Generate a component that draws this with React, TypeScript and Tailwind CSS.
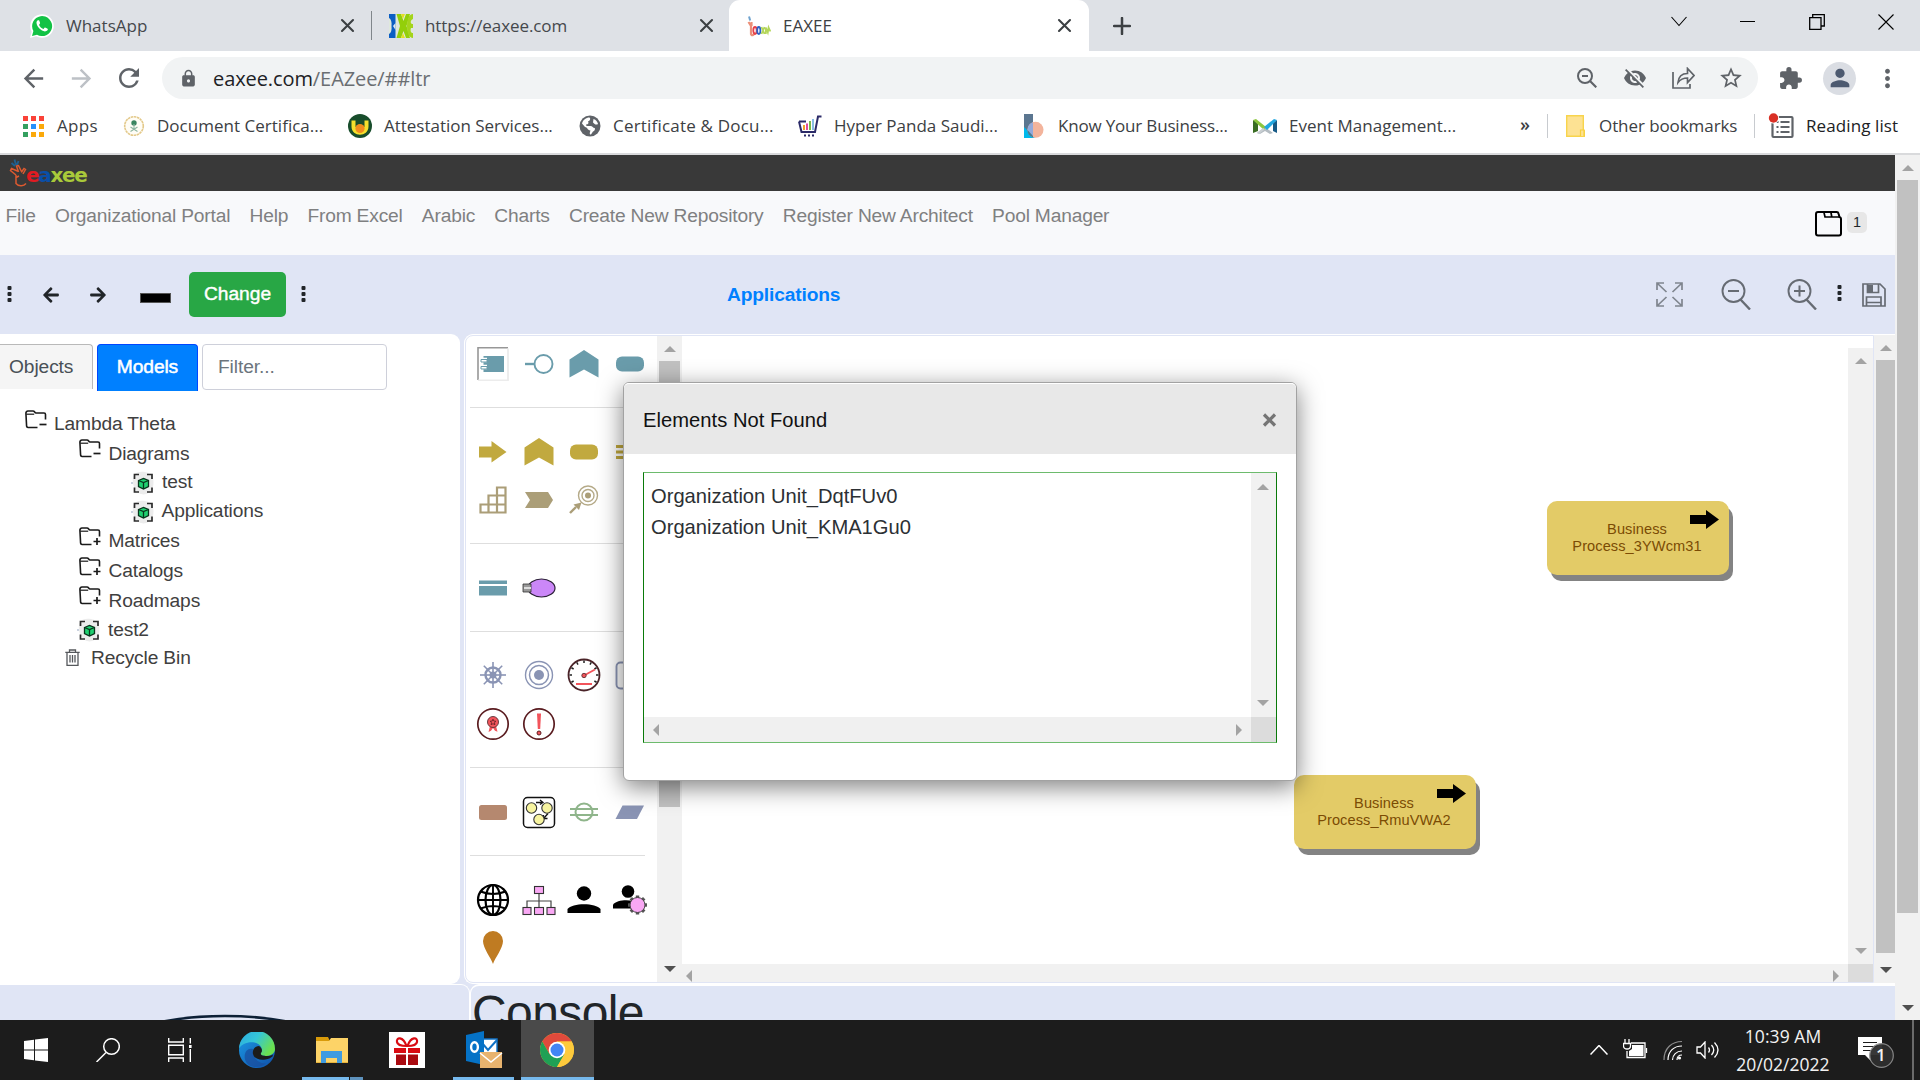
import React from "react";
import {
  MdArrowBack,
  MdArrowForward,
  MdRefresh,
  MdLock,
  MdStarBorder,
  MdVisibilityOff,
  MdExtension,
  MdPerson,
  MdMoreVert,
} from "react-icons/md";
import { FaArrowLeft, FaArrowRight } from "react-icons/fa";

const ui = "font-['Open_Sans','Noto_Sans',sans-serif]";

/* ---------- shared pieces ---------- */

function Arrow({ dir, dark }: { dir: "up" | "down" | "left" | "right"; dark?: boolean }) {
  const d = {
    up: "M0 6 L6 0 L12 6Z",
    down: "M0 0 L12 0 L6 6Z",
    left: "M6 0 L6 12 L0 6Z",
    right: "M0 0 L6 6 L0 12Z",
  }[dir];
  const vertical = dir === "up" || dir === "down";
  return (
    <svg
      width={vertical ? 12 : 6}
      height={vertical ? 6 : 12}
      viewBox={vertical ? "0 0 12 6" : "0 0 6 12"}
      className="shrink-0"
    >
      <path d={d} fill={dark ? "#505050" : "#a3a3a3"} />
    </svg>
  );
}

function VDots({ className = "" }: { className?: string }) {
  return (
    <svg width="5" height="16" viewBox="0 0 5 16" className={"shrink-0 " + className}>
      <rect x="0.5" y="0" width="4" height="4" rx="1" fill="#212529" />
      <rect x="0.5" y="6" width="4" height="4" rx="1" fill="#212529" />
      <rect x="0.5" y="12" width="4" height="4" rx="1" fill="#212529" />
    </svg>
  );
}

/* ---------- browser chrome ---------- */

const WhatsAppIcon = () => (
  <svg width="24" height="24" viewBox="0 0 24 24">
    <path d="M0 24 L1.7 17.8 A11.8 11.8 0 1 1 6.2 22.3Z" fill="#fff" />
    <path d="M2 22 L3.4 17 A10 10 0 1 1 7 20.7Z" fill="#12c245" />
    <path
      d="M8 6.2 C7.2 6.4 6.3 7.6 6.5 9 C7 13 11 17 15 17.4 C16.6 17.4 17.8 16.4 17.9 15.1 C17.9 14.5 15.4 13.3 14.9 13.4 C14.3 13.7 13.9 15 13.3 14.9 C11.4 14.2 9.9 12.7 9.1 10.9 C9.1 10.3 10.2 9.6 10.1 9 L9.2 6.6 C9 6.2 8.6 6.1 8 6.2Z"
      fill="#fff"
    />
  </svg>
);

const EaxeeFavicon = () => (
  <svg width="24" height="24" viewBox="0 0 24 24">
    <path d="M0 0h24v24H0z" fill="#dfe8dc" />
    <path d="M0 0h6.500v24H0v-4c2-1 3-4 2.500-8C3 8 2 5 0 4z" fill="#0b5fc4" />
    <path d="M6.500 3v6l-2.500 3 2.500 4" fill="#dfe8f0" />
    <path d="M7.500 0h4.500l2.500 7L17 0h4l-3.500 12L21 24h-4l-2.500-7L12 24H7.500l3.500-12z" fill="#93cf0a" />
    <path d="M24 0v5c-2.500 1-3 4-1 5h1v4h-2c-1 3 0 5 2 5v5c-4 0-6-5-6-12S20 0 24 0z" fill="#a4d41c" />
    <path d="M12 0h4l-2 5zM12 24h4l-2-5z" fill="#e3e022" />
  </svg>
);

const HandFavicon = () => (
  <svg width="24" height="24" viewBox="0 0 24 24">
    <path d="M2 2.500l1.200 4" stroke="#6fa3cf" strokeWidth="2" />
    <path d="M1.500 8L4 12v8c1 2.500 3 1 3.500-2M4.500 12V8" stroke="#ec8f78" strokeWidth="2.200" fill="none" />
    <ellipse cx="8" cy="16.500" rx="1.700" ry="3.500" fill="none" stroke="#e8404a" strokeWidth="1.800" />
    <ellipse cx="11.800" cy="16.500" rx="1.600" ry="3.500" fill="none" stroke="#2d62c5" strokeWidth="1.800" />
    <path d="M14.500 13l3 7M17.500 13l-3 7M18.800 20v-6.500l2 5 .8-5 1.800 4" stroke="#b4d65a" strokeWidth="1.800" fill="none" />
  </svg>
);

function TabClose() {
  return (
    <svg width="19" height="19" viewBox="0 0 19 19">
      <path d="M4 4l11 11M15 4L4 15" stroke="#3c4043" strokeWidth="2.100" strokeLinecap="round" />
    </svg>
  );
}

function TabStrip() {
  return (
    <div className={"flex h-[51px] shrink-0 items-stretch bg-[#dee1e6] text-[17px] text-[#45484c] " + ui}>
      <div className="flex w-[371px] items-center pl-[30px]">
        <div className="w-[36px]"><WhatsAppIcon /></div>
        <div className="w-[272px]">WhatsApp</div>
        <TabClose />
      </div>
      <div className="my-auto h-[29px] w-px bg-[#80868b]" />
      <div className="flex w-[357px] items-center pl-[17px]">
        <div className="w-[36px]"><EaxeeFavicon /></div>
        <div className="w-[272px] tracking-[-0.08px]">https://eaxee.com</div>
        <TabClose />
      </div>
      <div className="flex w-[360px] items-center rounded-t-[11px] bg-white pl-[18px]">
        <div className="w-[36px]"><HandFavicon /></div>
        <div className="w-[272px] text-[#3c4043]">EAXEE</div>
        <TabClose />
      </div>
      <div className="flex flex-1 items-center pl-[24px]">
        <svg width="18" height="18" viewBox="0 0 18 18"><path d="M9 1v16M1 9h16" stroke="#3c4043" strokeWidth="2.500" strokeLinecap="round" /></svg>
      </div>
      <div className="flex h-[43px] items-center text-black">
        <div className="flex w-[69px] justify-center"><svg width="16" height="11" viewBox="0 0 16 11"><path d="M.5 1l7.500 8.500L15.500 1" fill="none" stroke="currentColor" strokeWidth="1.100" /></svg></div>
        <div className="flex w-[69px] justify-center"><div className="h-px w-[15px] bg-black" /></div>
        <div className="flex w-[69px] justify-center"><svg width="16" height="16" viewBox="0 0 16 16"><path d="M.7 3.700h11.300V15.300H.7zM3.700 3.700V.7H15.300V12H12" fill="none" stroke="currentColor" strokeWidth="1.300" /></svg></div>
        <div className="flex w-[69px] justify-center"><svg width="16" height="16" viewBox="0 0 16 16"><path d="M.5 .5l15 15M15.500 .5l-15 15" stroke="currentColor" strokeWidth="1.100" /></svg></div>
      </div>
    </div>
  );
}

function AddressBar() {
  const g = "text-[#5f6368]";
  return (
    <div className={"flex h-[54px] shrink-0 items-center bg-white pl-[9px] " + ui}>
      <div className="flex w-[48px] justify-center"><MdArrowBack size={29} className={g} /></div>
      <div className="flex w-[48px] justify-center"><MdArrowForward size={29} className="text-[#bdc1c6]" /></div>
      <div className="flex w-[57px] pl-[9px]"><MdRefresh size={30} className={g} /></div>
      <div className="flex h-[42px] w-[1596px] items-center rounded-full bg-[#f1f3f4] pl-[17px]">
        <MdLock size={19} className={"mr-[15px] " + g} />
        <div className="flex-1 pt-px text-[20px] tracking-[-0.09px] text-[#6a6e72]">
          <span className="text-[#202124]">eaxee.com</span>/EAZee/##ltr
        </div>
        <div className="flex w-[48px] justify-center">
          <svg width="20" height="20" viewBox="0 0 20 20" fill="none" stroke="#5f6368" strokeWidth="2"><circle cx="8" cy="8" r="7" /><path d="M13 13l6.300 6.300M5 8h6" strokeWidth="2.200" /></svg>
        </div>
        <div className="flex w-[48px] justify-center"><MdVisibilityOff size={24} className={g} /></div>
        <div className="flex w-[48px] justify-center">
          <svg width="23" height="22" viewBox="0 0 23 22" fill="none" stroke="#5f6368" strokeWidth="1.700"><path d="M1 5v16h17v-4" /><path d="M6 15.500c.5-5.500 4-9 9.500-9V1.500l6.500 7-6.500 7v-4.500c-4 0-7 1.200-9.500 4.500z" /></svg>
        </div>
        <div className="mr-[3px] flex w-[48px] justify-center"><MdStarBorder size={26} className={g} /></div>
      </div>
      <div className="flex w-[65px] justify-center"><MdExtension size={25} className={g} /></div>
      <div className="flex w-[33px] justify-center">
        <div className="flex h-[33px] w-[33px] shrink-0 items-center justify-center rounded-full bg-[#dadde3]"><MdPerson size={28} className="text-[#4d5a70]" /></div>
      </div>
      <div className="flex w-[62px] justify-center"><MdMoreVert size={29} className={g} /></div>
    </div>
  );
}

const AppsIcon = () => (
  <div className="grid w-[21px] grid-cols-3 gap-x-[3px] gap-y-[3px]">
    {["bg-[#fa4238]", "bg-[#fa4238]", "bg-[#fa4238]", "bg-[#34a060]", "bg-[#2490fb]", "bg-[#fba90a]", "bg-[#34a060]", "bg-[#fba90a]", "bg-[#fba90a]"].map((c, i) => (
      <div key={i} className={"h-[5px] w-[5px] " + c} />
    ))}
  </div>
);
const SealIcon = () => (
  <svg width="22" height="22" viewBox="0 0 22 22">
    <circle cx="11" cy="11" r="9.300" fill="#fffdf6" stroke="#e3c98a" strokeWidth="1.600" strokeDasharray="2.500 .6" />
    <circle cx="11" cy="8" r="2.700" fill="#3a8560" />
    <path d="M11 9v5M7.500 12l7 4.500M14.500 12l-7 4.500" stroke="#8db5a0" strokeWidth="1.100" />
  </svg>
);
const AttestIcon = () => (
  <svg width="24" height="24" viewBox="0 0 24 24">
    <circle cx="12" cy="12" r="12" fill="#184d2c" />
    <path d="M3.500 6.500h4v6c1 3 8 3 9 0v-6h4v6c0 11-17 11-17 0z" fill="#f5e02c" />
    <circle cx="12" cy="14.500" r="4.600" fill="#f08c1e" />
  </svg>
);
const GlobeIcon = () => (
  <svg width="22" height="22" viewBox="0 0 22 22">
    <circle cx="11" cy="11" r="10.500" fill="#5f6368" />
    <path d="M3 8.500c1-3.500 4-6 7.500-6 1.500 1.500.5 3-1.500 4 1 1.500.5 3-2 3l.5 1.500h4c2 0 2.500 2 4 2 1 0 .5 3-1.500 3.500L12 19.500c-2 0-1-2.500-.5-4C8 15 8.500 12 6 12z" fill="#fff" />
    <path d="M14.500 4c2.500.5 4 3 4.500 5-2 1.500-3.500 0-5-1.500z" fill="#fff" />
  </svg>
);
const CartIcon = () => (
  <svg width="24" height="22" viewBox="0 0 24 22">
    <path d="M1 6.500l2.500 10.500h13.500L20 1.500h3.500" fill="none" stroke="#2b2a68" strokeWidth="2" />
    <path d="M1 6.500h7" stroke="#2b2a68" strokeWidth="2" />
    <path d="M6 10v5" stroke="#f0a029" strokeWidth="2" /><path d="M9 8.500v6.500" stroke="#e24a9a" strokeWidth="2" /><path d="M12 6v9" stroke="#79b947" strokeWidth="2" /><path d="M15 4v11" stroke="#5fa8dc" strokeWidth="1.500" />
    <path d="M6 20.500h2M10 20.500h2M14 20.500h2" stroke="#2b2a68" strokeWidth="2" />
  </svg>
);
const KnowIcon = () => (
  <svg width="20" height="24" viewBox="0 0 20 24">
    <rect width="9" height="24" fill="#5b7690" />
    <path d="M0 13l11 11H0z" fill="#00b9ec" />
    <circle cx="11.500" cy="15.800" r="8" fill="#f3b49c" />
    <path d="M9 8.200v13.500A9 9 0 0 1 3.500 16a8 8 0 0 1 5.500-7.800z" fill="#93aadb" />
    <path d="M3.500 16l5.500 6v1.500a8 8 0 0 1-5.500-7.500z" fill="#4a7c92" />
  </svg>
);
const EventIcon = () => (
  <svg width="24" height="16" viewBox="0 0 24 16">
    <path d="M4 15l8-6 8 6-3 1-5-3-5 3z" fill="#b4bcc2" />
    <path d="M0 2l5 3v8l-5 2z" fill="#3a6d23" /><path d="M0 2l3-1 10 8-2 3z" fill="#8cc63e" />
    <path d="M24 2l-4 3v8l4 2z" fill="#175a86" /><path d="M24 2l-3-1-10 8 3 3z" fill="#22a7e0" />
    <path d="M4 15l6-5 2 1-6 5z" fill="#c9cfd3" />
  </svg>
);

function Bookmark({ icon, label, iconCell, textCell }: { icon: React.ReactNode; label: string; iconCell: string; textCell: string }) {
  return (
    <div className="flex shrink-0 items-center">
      <div className={"flex shrink-0 items-center " + iconCell}>{icon}</div>
      <div className={"shrink-0 " + textCell}>{label}</div>
    </div>
  );
}

function BookmarksBar() {
  return (
    <div className={"flex h-[50px] shrink-0 items-center border-b-2 border-[#d9dadc] bg-white pb-[6px] pl-[23px] text-[17px] whitespace-nowrap text-[#3c4043] " + ui}>
      <Bookmark icon={<AppsIcon />} label="Apps" iconCell="w-[34px]" textCell="w-[66px] tracking-[0.3px]" />
      <Bookmark icon={<SealIcon />} label="Document Certifica..." iconCell="w-[34px]" textCell="w-[191px] tracking-[0.02px]" />
      <Bookmark icon={<AttestIcon />} label="Attestation Services..." iconCell="w-[36px]" textCell="w-[195px] tracking-[-0.02px]" />
      <Bookmark icon={<GlobeIcon />} label="Certificate & Docu..." iconCell="w-[34px]" textCell="w-[185px] tracking-[0.2px]" />
      <Bookmark icon={<CartIcon />} label="Hyper Panda Saudi..." iconCell="w-[36px]" textCell="w-[190px]" />
      <Bookmark icon={<KnowIcon />} label="Know Your Business..." iconCell="w-[34px]" textCell="w-[195px] tracking-[-0.18px]" />
      <Bookmark icon={<EventIcon />} label="Event Management..." iconCell="w-[36px]" textCell="w-[231px] tracking-[0.02px]" />
      <div className="w-[27px] pb-1 text-[18px] font-semibold">»</div>
      <div className="h-[24px] w-px bg-[#c8cbcf]" />
      <div className="ml-[18px] w-[33px]">
        <svg width="19" height="22" viewBox="0 0 19 22"><path d="M.7 .7h16.600v14l1 1v5.600H.7z" fill="#fde293" stroke="#f8d44c" strokeWidth="1.400" /><path d="M14.500 21v-6h3.500v6" fill="#fde293" stroke="#f8cf3a" strokeWidth="1.200" /></svg>
      </div>
      <div className="w-[155px] tracking-[-0.08px]">Other bookmarks</div>
      <div className="h-[24px] w-px bg-[#c8cbcf]" />
      <div className="ml-[13px] w-[38px]">
        <svg width="26" height="26" viewBox="0 0 26 26"><rect x="4.500" y="4" width="20" height="20" rx="1" fill="none" stroke="#5f6368" strokeWidth="2.200" /><path d="M8.500 9h2M8.500 14h2M8.500 19h2M12.500 9h9M12.500 14h9M12.500 19h9" stroke="#5f6368" strokeWidth="2" /><circle cx="5.500" cy="5" r="5.600" fill="#fff" /><circle cx="5.500" cy="5" r="4.700" fill="#d93025" /></svg>
      </div>
      <div className="tracking-[0.1px] text-[#202124]">Reading list</div>
    </div>
  );
}

/* ---------- application header ---------- */

const Brand = () => (
  <div className="flex h-[36px] items-center bg-[#393939] pl-[9px]">
    <svg width="20" height="30" viewBox="0 0 20 30" fill="none" className="-mt-[1px]">
      <path d="M2.500 5l3.500 3M5.500 1.500l1.500 5.500M9.500 3l-1.500 4" stroke="#1f5f8f" strokeWidth="1.900" />
      <path d="M7 17L1.500 12.500 2.500 10.500l7 3M9.500 14L7.500 8l2-.5 3.500 7M12.500 14l2.500-3.500 1.500 1-2.500 4.500M7 17v8.500c3 3.500 8 2.500 10 0M7 19.500l3-1.500" stroke="#dd5a30" strokeWidth="1.500" />
    </svg>
    <div className="-ml-[3px] flex pt-[3px] font-['DejaVu_Sans',sans-serif] text-[20px] leading-none font-bold tracking-[-1.3px]">
      <span className="text-[#e11b22]">e</span>
      <span className="text-[#0a4fa8]">a</span>
      <span className="text-[#a9c93a]">xee</span>
    </div>
  </div>
);

function MenuBar() {
  const items = ["File", "Organizational Portal", "Help", "From Excel", "Arabic", "Charts", "Create New Repository", "Register New Architect", "Pool Manager"];
  return (
    <div className="flex h-[64px] justify-between bg-[#f8f9fb] pl-[5.500px]">
      <div className="flex gap-[19.200px] pt-[14px] text-[19.200px] leading-[22px] tracking-[-0.18px] whitespace-nowrap text-[#7f8081]">
        {items.map((t) => <span key={t}>{t}</span>)}
      </div>
      <div className="flex h-[24px] gap-[5px] pt-[20px] pr-[28px]">
        <svg width="27" height="26" viewBox="0 0 27 26" className="shrink-0" fill="none" stroke="#000" strokeWidth="2">
          <path d="M1 22.500V3a2 2 0 0 1 2-2h18.500a2 2 0 0 1 2 1.500L24.500 6a2 2 0 0 1 1.500 2v14.500a2 2 0 0 1-2 2H3a2 2 0 0 1-2-2z" />
          <path d="M9 1.500l1 4.500h15M16 1.500l.7 4" strokeWidth="1.700" />
        </svg>
        <div className="mt-px flex h-[21px] w-[20px] shrink-0 items-center justify-center rounded-[5px] bg-[#e7e7e7] text-[14.400px] text-[#212529]">1</div>
      </div>
    </div>
  );
}

function Toolbar() {
  return (
    <div className="flex h-[79px] shrink-0 items-center pl-[7px]">
      <VDots className="-mt-[2px]" />
      <FaArrowLeft size={18} className="ml-[30px] text-[#212529]" />
      <FaArrowRight size={18} className="ml-[29px] text-[#212529]" />
      <div className="mt-[6px] ml-[33px] h-[10px] w-[31px] border border-[#555] bg-black" />
      <div className="ml-[18px] flex h-[45px] w-[97px] items-center justify-center rounded-[5px] bg-[#28a745] text-[19.200px] text-white [-webkit-text-stroke:0.4px_white]">Change</div>
      <VDots className="-mt-[2px] ml-[15px]" />
      <div className="ml-[421px] flex-1 pt-px text-[19.200px] font-bold tracking-[-0.15px] text-[#0080ff]">Applications</div>
      <svg width="27" height="25" viewBox="0 0 27 25" fill="none" stroke="#7f858e" strokeWidth="1.700"><path d="M1 8V1h7M1.500 1.500l9 8.500M19 1h7v7M25.500 1.500l-9 8.500M1 17v7h7M1.500 23.500l9-8.500M26 17v7h-7M25.500 23.500l-9-8.500" /></svg>
      {["M7 12h11", "M7 12h11M12.500 6.500v11"].map((d, i) => (
        <svg key={i} width="30" height="31" viewBox="0 0 30 31" fill="none" stroke="#666b73" className={i ? "ml-[36px]" : "ml-[38px]"}>
          <circle cx="12.500" cy="12" r="11" strokeWidth="1.900" /><path d={d} strokeWidth="2" /><path d="M19.500 20.500l9.500 10" strokeWidth="2.400" />
        </svg>
      ))}
      <VDots className="-mt-[4px] ml-[20px]" />
      <svg width="24" height="24" viewBox="0 0 24 24" fill="none" stroke="#666b73" strokeWidth="1.700" className="mr-[9px] ml-[20px]">
        <path d="M1 1h17l5 5v17H1z" /><path d="M5.500 1v8.500h11V1M4.500 23v-9h14.500v9M4.500 19.500h14.500" /><path d="M6 2h5v7H6z" fill="#666b73" stroke="none" />
      </svg>
    </div>
  );
}

/* ---------- models tree ---------- */

function Folder({ open }: { open?: boolean }) {
  return (
    <svg width="22" height="20" viewBox="0 0 22 20" fill="none" stroke="#1a1a1a" strokeWidth="1.600" className="-mt-[9px] shrink-0">
      <path d="M12.500 17.500H3a1.500 1.500 0 0 1-1.400-1.300L.9 3A2 2 0 0 1 3 1h5c1.800 0 1.500 2 3 2h8a1.500 1.500 0 0 1 1.500 1.500V9.500" />
      <path d="M1.200 4.200h8" strokeWidth="1.200" />
      <path d={open ? "M14.500 14.500h7" : "M14.500 14.500h7M18 11v7"} strokeWidth="1.700" />
    </svg>
  );
}

const ModelIcon = () => (
  <svg width="24" height="24" viewBox="0 0 24 24" fill="none" className="mt-[1px] shrink-0">
    <path d="M3 4c3-5 15-4 18 1 2 4 2 9 0 13-2 5-9 7-13 4-5-2-8-12-5-18z" fill="#ececec" />
    <path d="M3.500 8V3.500H8M16 3.500h5V8M3.500 16.500v4.500H8M16 21h5v-4.500" stroke="#2b2b2b" strokeWidth="1.700" />
    <path d="M7.500 9.500L12.500 7.500l5 2v6l-5 2.500-5-2.500z" fill="#1fd070" stroke="#08341c" strokeWidth="1.300" />
    <path d="M7.500 9.500l5 2 5-2M12.500 11.500V18" stroke="#08341c" strokeWidth="1.300" />
    <circle cx="1" cy="12" r="1" fill="#b8c4d6" />
  </svg>
);

function TreeRow({ pad, gap, height, icon, label }: { pad: string; gap: string; height: string; icon: React.ReactNode; label: string }) {
  return (
    <div className={"flex items-center " + pad + " " + gap + " " + height}>
      {icon}
      <span>{label}</span>
    </div>
  );
}

function ModelsPanel() {
  return (
    <div className="w-[460px] shrink-0 rounded-r-[9px] bg-white pt-[10px]">
      <div className="flex items-start text-[19.200px] tracking-[-0.1px]">
        <div className="flex h-[45px] w-[93px] items-center rounded-tr-[4px] border-t border-r border-[#b9b9b9] bg-[#f5f5f5] pl-[9px] text-[#495057]">Objects</div>
        <div className="ml-[4px] flex h-[47px] w-[101px] items-center justify-center rounded-t-[4px] border border-b-0 border-[#0046ff] bg-[#0080ff] pb-[2px] text-white [-webkit-text-stroke:0.5px_white]">Models</div>
        <div className="ml-[4px] flex h-[46px] w-[185px] items-center rounded-[4px] border border-[#ced0da] pl-[15px] text-[#6c757d]">Filter...</div>
      </div>
      <div className="pt-[18px] text-[19.200px] leading-none tracking-[-0.15px] text-[#3f4040]">
        <TreeRow pad="pl-[25px]" gap="gap-[7px]" height="h-[30px]" icon={<Folder open />} label="Lambda Theta" />
        <TreeRow pad="pl-[79px]" gap="gap-[7.500px]" height="h-[29px]" icon={<Folder open />} label="Diagrams" />
        <TreeRow pad="pl-[131px]" gap="gap-[7px]" height="h-[28px]" icon={<ModelIcon />} label="test" />
        <TreeRow pad="pl-[131px]" gap="gap-[6.500px]" height="h-[30px]" icon={<ModelIcon />} label="Applications" />
        <TreeRow pad="pl-[79px]" gap="gap-[7.500px]" height="h-[30px]" icon={<Folder />} label="Matrices" />
        <TreeRow pad="pl-[79px]" gap="gap-[7.500px]" height="h-[30px]" icon={<Folder />} label="Catalogs" />
        <TreeRow pad="pl-[79px]" gap="gap-[7.500px]" height="h-[29px]" icon={<Folder />} label="Roadmaps" />
        <TreeRow pad="pl-[77px]" gap="gap-[7px]" height="h-[29px]" icon={<ModelIcon />} label="test2" />
        <TreeRow
          pad="pl-[65px]"
          gap="gap-[11px]"
          height="h-[27px]"
          icon={
            <svg width="15" height="17" viewBox="0 0 15 17" fill="none" stroke="#55585c" strokeWidth="1.300"><path d="M.3 3.300h14.400M4.500 3V1h6v2M2 3.500v12.800h11V3.500M5 6v7.500M7.500 6v7.500M10 6v7.500" /></svg>
          }
          label="Recycle Bin"
        />
      </div>
    </div>
  );
}

/* ---------- element palette ---------- */

function Glyph({ children }: { children?: React.ReactNode }) {
  return (
    <div className="flex w-[45.700px] shrink-0 justify-center">
      <svg width="34" height="34" viewBox="-17 -17 34 34" fill="none">{children}</svg>
    </div>
  );
}

const teal = "#6a9cab";
const gold = "#c1a93f";
const tan = "#ab9e78";
const slate = "#8a94b4";

function Row({ className, children }: { className: string; children: React.ReactNode }) {
  return <div className={"flex h-[34px] w-[184px] shrink-0 " + className}>{children}</div>;
}
const Rule = ({ className }: { className: string }) => <div className={"h-px w-[175px] shrink-0 bg-[#dedede] " + className} />;

const chevronUp = "M-14.500 -4.500L0 -14 14.500 -4.500V13.500L0 5.500-14.500 13.500z";
const spokes = [0, 45, 90, 135, 180, 225, 270, 315];

function Palette() {
  return (
    <div className="flex h-[646px] w-[191px] shrink-0 flex-col overflow-hidden pl-[4px]">
      <Row className="mt-[10.500px]">
        <Glyph>
          <path d="M-15 16V-16.300H15" stroke="#979797" strokeWidth="1.600" /><path d="M15 -15.500V16.300H-15" stroke="#ececec" strokeWidth="1.800" />
          <path d="M-9.500 -8H11V8H-9.500z" fill={teal} />
          <path d="M-12 -4h6M-12 3h6" stroke="#fff" strokeWidth="4.500" /><path d="M-12 -4.500h6v2.500h-6zM-12 2.500h6v2.500h-6z" stroke={teal} strokeWidth="1" />
        </Glyph>
        <Glyph><circle cx="4.500" cy="0" r="9" stroke={teal} strokeWidth="1.900" /><path d="M-14 0h9.500" stroke={teal} strokeWidth="2.400" /></Glyph>
        <Glyph><path d={chevronUp} fill={teal} /></Glyph>
        <Glyph><rect x="-14" y="-7.500" width="28" height="15" rx="6" fill={teal} /></Glyph>
      </Row>
      <Rule className="mt-[26.500px]" />
      <Row className="mt-[27px]">
        <Glyph><path d="M-14-5.500H-1.500V-11L13.500 0-1.500 10.500V5.500H-14z" fill={gold} /></Glyph>
        <Glyph><path d={chevronUp} fill={gold} /></Glyph>
        <Glyph><rect x="-14" y="-7.500" width="28" height="15" rx="6" fill={gold} /></Glyph>
        <Glyph><path d="M-14-5.500h28M-14 0h28M-14 5.500h28" stroke={gold} strokeWidth="3" /></Glyph>
      </Row>
      <Row className="mt-[14px]">
        <Glyph><path d="M-12.500 12.500V4.500H-4.500V-4.500H4V-12.500H12.500V12.500zM-4.500 4.500V12.500M4 -4.500V12.500M-4.500 4.500H12.500M4 -4.500H12.500" stroke={tan} strokeWidth="2.200" /></Glyph>
        <Glyph><path d="M-14-8H9L14 0 9 8H-14L-9 0z" fill={tan} /></Glyph>
        <Glyph>
          <circle cx="4" cy="-4.500" r="9.500" stroke="#b5aa88" strokeWidth="1.400" /><circle cx="4" cy="-4.500" r="6" stroke="#b5aa88" strokeWidth="1.400" /><circle cx="4" cy="-4.500" r="3" fill={tan} />
          <path d="M-14 13l6-6" stroke={tan} strokeWidth="2.400" /><path d="M-2.500 2.500l-2.500 7.500-5.500-5.500z" fill={tan} />
        </Glyph>
      </Row>
      <Rule className="mt-[26px]" />
      <Row className="mt-[26.500px]">
        <Glyph><path d="M-14-7.500h28v3.500h-28zM-14-2h28V7.500h-28z" fill={teal} /></Glyph>
        <Glyph>
          <ellipse cx="2.500" cy="0" rx="13.500" ry="9" fill="#cb87f8" stroke="#2c2138" strokeWidth="1.200" />
          <path d="M-16-4h8v8h-8z" fill="#999" stroke="#333" strokeWidth=".8" /><path d="M-15-1h7v2h-7z" fill="#ddd" />
        </Glyph>
      </Row>
      <Rule className="mt-[26.500px]" />
      <Row className="mt-[26px]">
        <Glyph>
          {spokes.map((a) => <path key={a} d="M0 0V-13" transform={`rotate(${a})`} stroke={slate} strokeWidth="1.600" />)}
          <circle r="7.500" stroke={slate} strokeWidth="2.400" /><circle r="3.500" fill={slate} />
        </Glyph>
        <Glyph><circle r="13.500" stroke={slate} strokeWidth="1.400" /><circle r="9.500" stroke={slate} strokeWidth="1.500" /><circle r="5" fill={slate} /></Glyph>
        <Glyph>
          <circle r="15.500" stroke="#4a2328" strokeWidth="1.800" fill="#fff" />
          {[-90, -60, -30, 0, 30, 60, 90, 120, -120].map((a) => <path key={a} d="M0 -14.500V-12" transform={`rotate(${a})`} stroke="#222" strokeWidth="1.500" />)}
          <path d="M0 .5L11-5.500M-8 9H8" stroke="#f2545b" strokeWidth="1.900" /><circle cy=".5" r="2.200" fill="#f2545b" stroke="#4a2328" strokeWidth=".8" />
        </Glyph>
        <Glyph><rect x="-13.500" y="-12.500" width="27" height="26" rx="4" stroke={slate} strokeWidth="1.900" /></Glyph>
      </Row>
      <Row className="mt-[15px]">
        <Glyph>
          <circle r="15.200" stroke="#5a1c20" strokeWidth="1.700" fill="#fff" />
          <path d="M-3 2l-1.500 6 2.500-1.200L0 4 2 6.800l2.500 1L3 2z" fill="#f2545b" /><circle cy="-2" r="5.500" fill="#f2545b" stroke="#5a3034" strokeWidth=".9" />
          <path d="M0-4.800l.9 1.900 2 .2-1.500 1.400.5 2L0-.3l-1.900 1 .5-2-1.500-1.400 2-.2z" stroke="#5a1c20" strokeWidth=".8" />
        </Glyph>
        <Glyph>
          <circle r="15.200" stroke="#5a1c20" strokeWidth="1.700" fill="#fff" />
          <path d="M-2-10.500h4L1.200 5H-1.200z" fill="#f2545b" /><circle cy="9" r="2" fill="#f2545b" stroke="#5a1c20" strokeWidth="1" />
        </Glyph>
      </Row>
      <Rule className="mt-[26px]" />
      <Row className="mt-[26.500px]">
        <Glyph><rect x="-14" y="-7" width="28" height="15" rx="2.500" fill="#b5886f" /></Glyph>
        <Glyph>
          <rect x="-15.500" y="-14.500" width="31" height="30" rx="4" fill="#fff" stroke="#111" strokeWidth="1.500" />
          <path d="M-3-9.500L3-9.500M1-12l3 2.500-3 2M9 1.500L5 6M4.500 3l0 3.500 4 0" stroke="#111" strokeWidth="1.300" />
          <g fill="#f7f4a0" stroke="#333" strokeWidth="1.100"><circle cx="-7.500" cy="-4" r="5.200" /><circle cx="8" cy="-4" r="5.200" /><circle cx="0" cy="7.500" r="5.200" /></g>
        </Glyph>
        <Glyph><circle r="8.500" stroke="#8fb58b" strokeWidth="2" /><path d="M-14-3h28M-14 3h28" stroke="#8fb58b" strokeWidth="2" /></Glyph>
        <Glyph><path d="M-7.500-6.500H14L7 7H-14.500z" fill={slate} /></Glyph>
      </Row>
      <Rule className="mt-[26.500px]" />
      <Row className="mt-[26.500px]">
        <Glyph><g stroke="#000" strokeWidth="2.200"><circle r="15" /><ellipse rx="7.500" ry="15" /><path d="M0-15V15M-15 0H15M-12.500-8.500q12.500 5 25 0M-12.500 8.500q12.500-5 25 0" strokeWidth="1.900" /></g></Glyph>
        <Glyph>
          <path d="M0-6V7M-12 7V1H12V7" stroke="#444" strokeWidth="1.200" />
          <g fill="#f9a8f4" stroke="#333" strokeWidth="1.100"><rect x="-4.500" y="-13.500" width="9" height="7" /><rect x="-16" y="7.500" width="8" height="7" /><rect x="-4.500" y="7.500" width="9" height="7" /><rect x="8" y="7.500" width="8" height="7" /></g>
        </Glyph>
        <Glyph><circle cy="-6.500" r="7.200" fill="#000" /><path d="M-16.500 13V9C-12 2.500 12 2.500 16.500 9V13z" fill="#000" /></Glyph>
        <Glyph>
          <circle cx="-2" cy="-8.500" r="6.300" fill="#000" /><path d="M-17 8.500V4.500C-13-1 3-1 7 3V8.500z" fill="#000" />
          {spokes.map((a) => <path key={a} d="M0-7V-9.500" transform={`translate(7.500 5) rotate(${a})`} stroke="#555" strokeWidth="3.400" />)}
          <circle cx="7.500" cy="5" r="7.500" fill="#f9a8f4" stroke="#444" strokeWidth="1" />
        </Glyph>
      </Row>
      <Row className="mt-[13px]">
        <Glyph><path d="M0 17C-2 11-10 1-10-6A10 10 0 0 1 10-6C10 1 2 11 0 17z" fill="#bf7b22" /></Glyph>
      </Row>
    </div>
  );
}

/* ---------- diagram canvas ---------- */

function ProcessNode({ name, place }: { name: string; place: string }) {
  return (
    <div className={"absolute flex h-[74px] w-[182px] flex-col items-center rounded-[10px] bg-[#e3cb67] pt-[20px] pr-[2px] text-[14.600px] leading-[17px] tracking-[0.08px] text-[#7b4b04] shadow-[4px_6px_0_0_#838383] " + place}>
      <div>Business</div>
      <div className="whitespace-nowrap">{name}</div>
      <svg width="29" height="19" viewBox="0 0 29 19" className="absolute top-[9px] right-[10px]"><path d="M0 5h16V0l13 9.500L16 19v-5H0z" fill="#000" /></svg>
    </div>
  );
}

function Canvas() {
  return (
    <div className="flex w-[1191px] shrink-0 flex-col">
      <div className="flex h-[628px]">
        <div className="relative w-[1166px]">
          <ProcessNode name="Process_3YWcm31" place="left-[865px] top-[165px]" />
          <ProcessNode name="Process_RmuVWA2" place="left-[612px] top-[439px]" />
        </div>
        <div className="mt-[12px] flex w-[25px] flex-col items-center justify-between bg-[#f1f1f1] pt-[10px] pb-[10px]">
          <Arrow dir="up" /><Arrow dir="down" />
        </div>
      </div>
      <div className="flex h-[18px]">
        <div className="flex w-[1166px] items-center justify-between bg-[#f1f1f1] pt-[6px] pr-[9px] pl-[4px]">
          <Arrow dir="left" /><Arrow dir="right" />
        </div>
        <div className="w-[25px] bg-[#dcdcdc]" />
      </div>
    </div>
  );
}

function Workspace() {
  return (
    <div className="flex h-[650px] shrink-0">
      <ModelsPanel />
      <div className="ml-[4px] flex flex-1 rounded-l-[9px] border border-r-0 border-white bg-white">
        <div className="flex rounded-l-[8px] border border-[#e0e5f5] bg-white">
          <Palette />
          <div className="flex w-[25px] shrink-0 flex-col items-center bg-[#f1f1f1]">
            <div className="flex h-[25px] items-center"><Arrow dir="up" /></div>
            <div className="h-[446px] w-[21px] bg-[#c1c1c1]" />
            <div className="mt-auto flex h-[26px] items-center"><Arrow dir="down" dark /></div>
          </div>
          <Canvas />
        </div>
        <div className="flex w-[21px] shrink-0 flex-col items-center bg-[#f1f1f1]">
          <div className="flex h-[25px] items-center pl-[2px]"><Arrow dir="up" /></div>
          <div className="ml-[2px] h-[593px] w-[19px] bg-[#c1c1c1]" />
          <div className="mt-auto flex h-[26px] items-center pl-[2px]"><Arrow dir="down" dark /></div>
        </div>
      </div>
    </div>
  );
}

function ConsoleStrip() {
  return (
    <div className="flex min-h-0 flex-1 overflow-hidden">
      <div className="flex w-[470px] shrink-0 justify-center rounded-tr-[9px] border-t border-r border-white pr-[20px]">
        <svg width="200" height="40" viewBox="0 0 200 40" className="mt-[29px] shrink-0"><ellipse cx="100" cy="51" rx="132" ry="49" fill="none" stroke="#0d2036" strokeWidth="2.600" /></svg>
      </div>
      <div className="flex-1 rounded-tl-[9px] border-t-2 border-l border-white bg-[#dfe5f5] pl-[1px] text-[48px] leading-[54px] tracking-[-0.6px] text-[#212529]">Console</div>
    </div>
  );
}

function NotFoundDialog() {
  return (
    <div className="absolute top-[382px] left-[623px] h-[399px] w-[674px] rounded-[6px] border border-[#a2a2a2] bg-white shadow-[0_6px_24px_rgba(0,0,0,0.5)]">
      <div className="flex h-[71px] items-center justify-between rounded-t-[5px] border-t border-white bg-[#e8e8e8] pt-[2px] pr-[17px] pl-[19px] text-[20.160px] text-[#111]">
        <span className="tracking-[0.03px]">Elements Not Found</span>
        <svg width="19" height="14" viewBox="0 0 19 14"><path d="M4 1.500l11 11M15 1.500l-11 11" stroke="#757575" strokeWidth="3.200" /></svg>
      </div>
      <div className="mt-[18px] ml-[19px] flex h-[271px] w-[634px] flex-col border border-x-[#0a7a0a] border-y-[#6dbb6d]">
        <div className="flex flex-1">
          <div className="flex-1 pt-[8px] pl-[7px] text-[20.160px] leading-[31px] text-[#2c3034]">
            <div>Organization Unit_DqtFUv0</div>
            <div>Organization Unit_KMA1Gu0</div>
          </div>
          <div className="flex w-[25px] flex-col items-center justify-between bg-[#f1f1f1] py-[11px] pr-px"><Arrow dir="up" /><Arrow dir="down" /></div>
        </div>
        <div className="flex h-[25px]">
          <div className="flex flex-1 items-center justify-between bg-[#f0f0f0] px-[9px]"><Arrow dir="left" /><Arrow dir="right" /></div>
          <div className="w-[25px] bg-[#dcdcdc]" />
        </div>
      </div>
    </div>
  );
}

/* ---------- taskbar ---------- */

const EdgeIcon = () => (
  <svg width="36" height="36" viewBox="0 0 36 36">
    <defs>
      <linearGradient id="edgeTop" x1="0" y1="0" x2="1" y2=".5"><stop offset="0" stopColor="#2aa9e0" /><stop offset=".5" stopColor="#35c6d8" /><stop offset="1" stopColor="#6be04f" /></linearGradient>
      <linearGradient id="edgeLow" x1="0" y1="0" x2="1" y2="1"><stop offset="0" stopColor="#1c9be6" /><stop offset="1" stopColor="#0f4fa8" /></linearGradient>
    </defs>
    <circle cx="18" cy="18" r="18" fill="url(#edgeLow)" />
    <path d="M0 17A18 18 0 0 1 36 17c0 4-4 7-8.500 7-4 0-7-1-6-3 3-3 1-9-6-10.500C9 9.500 2 12 0 17z" fill="url(#edgeTop)" />
    <path d="M14 17c-1 9 6 15 13 14.500-6 5-18 5.500-21-4-1.500-8 3-12 8-10.500z" fill="#1a4f9f" opacity=".75" />
    <path d="M20 14c-4 0-7 4-6 8 1 5 7 6.500 12.500 5.500 3-.5 5-1.500 7-3l.5-2c-2 1.200-4 1.500-6 1.500-4 0-7-1-6-3 1.500-1.500 1.500-5-2-7z" fill="#1c1c1c" />
  </svg>
);

const ChromeIcon = () => (
  <svg width="34" height="34" viewBox="-17 -17 34 34">
    <circle r="17" fill="#fbc02d" />
    <path d="M-14.700-8.500A17 17 0 0 1 14.700-8.500L0-8.500 -7.400 4.200z" fill="#e04a3c" />
    <path d="M-14.700-8.500A17 17 0 0 0 0 17L7.400 4.200-7.400 4.200z" fill="#1fa055" />
    <path d="M14.700-8.500A17 17 0 0 1 0 17L7.400 4.200 0-8.500z" fill="#fdca3c" />
    <circle r="8.300" fill="#fff" /><circle r="6.500" fill="#4285f4" />
  </svg>
);

function TaskCell({ width, children, bar, active }: { width: string; children: React.ReactNode; bar?: React.ReactNode; active?: boolean }) {
  return (
    <div className={"flex h-[60px] shrink-0 flex-col items-center " + width + (active ? " bg-[#4a4a4a]" : "")}>
      <div className="flex h-[57px] items-center justify-center pt-[3px]">{children}</div>
      {bar}
    </div>
  );
}

function Taskbar() {
  return (
    <div className={"flex h-[60px] shrink-0 bg-[#1c1c1c] text-[#f2f2f2] " + ui}>
      <TaskCell width="w-[72px]"><svg width="24" height="24" viewBox="0 0 24 24" fill="#fff"><path d="M0 3l10-1.300v9.800H0zM11 1.500L24 0v11.500H11zM0 12.500h10v9.800L0 21zM11 12.500h13V24l-13-1.500z" /></svg></TaskCell>
      <TaskCell width="w-[72px]"><svg width="24" height="24" viewBox="0 0 24 24" fill="none" stroke="#fff" strokeWidth="1.500"><circle cx="15.500" cy="8.500" r="7.800" /><path d="M10 14.500l-9.500 9.500" /></svg></TaskCell>
      <TaskCell width="w-[72px]"><svg width="24" height="24" viewBox="0 0 24 24" fill="none" stroke="#fff" strokeWidth="1.400"><path d="M.7 0v4h14.600V0M.7 24v-4h14.600v4M.7 7.200h14.600v9.600H.7zM22.300 0v5.500M22.300 11v13" /><path d="M21 7h2.600v3H21z" fill="#fff" stroke="none" /></svg></TaskCell>
      <TaskCell width="w-[82px]"><EdgeIcon /></TaskCell>
      <TaskCell
        width="w-[68px]"
        bar={<div className="flex h-[3px] w-[61px] gap-px"><div className="w-[47px] bg-[#76b9ed]" /><div className="w-[13px] bg-[#5e92bd]" /></div>}
      >
        <svg width="32" height="28" viewBox="0 0 32 28"><path d="M0 1h12l2 4H0z" fill="#d99b0a" /><path d="M0 5h13l2-3h17v24H0z" fill="#fdd367" /><path d="M0 26h32v1H0z" fill="#e7b43c" /><path d="M5 15h21v12h-5v-5H10v5H5z" fill="#3f9be0" /></svg>
      </TaskCell>
      <TaskCell width="w-[82px]">
        <div className="flex h-[36px] w-[36px] items-center justify-center bg-white">
          <svg width="26" height="29" viewBox="0 0 26 29"><path d="M0 12h12v5H0zM14 12h12v5H14z" fill="#d90b12" /><path d="M2 18.500h10V29H2zM14 18.500h10V29H14z" fill="#a90a10" /><path d="M12.500 10C9 0 2 1 3 6c.5 3 5 4 9.500 4zM13.500 10C17 0 24 1 23 6c-.5 3-5 4-9.500 4z" fill="none" stroke="#d90b12" strokeWidth="2.200" /></svg>
        </div>
      </TaskCell>
      <TaskCell width="w-[73px]" bar={<div className="-ml-[2px] h-[3px] w-[61px] bg-[#76b9ed]" />}>
        <svg width="38" height="38" viewBox="0 0 38 38" className="-ml-[1px]">
          <path d="M16 8h16v18H16z" fill="#fff" stroke="#0f72c6" strokeWidth="1.400" /><path d="M17 12l6 7 9-10" fill="none" stroke="#0f72c6" strokeWidth="2" />
          <path d="M1 4L19 0v34L1 30z" fill="#0572c6" /><ellipse cx="9.500" cy="16" rx="3.400" ry="4.800" fill="none" stroke="#fff" strokeWidth="2.400" />
          <path d="M15 21h22v16H15z" fill="#e8b36e" /><path d="M15 22l11 9 11-9" fill="none" stroke="#fff" strokeWidth="1.600" />
        </svg>
      </TaskCell>
      <TaskCell width="w-[73px]" active bar={<div className="h-[3px] w-full bg-[#76b9ed]" />}><div className="-ml-px"><ChromeIcon /></div></TaskCell>

      <div className="ml-auto flex h-[60px] items-center">
        <svg width="18" height="10" viewBox="0 0 18 10" fill="none" stroke="#fff" strokeWidth="1.500"><path d="M.5 9.500l8.500-9 8.500 9" /></svg>
        <svg width="25" height="20" viewBox="0 0 25 20" fill="none" stroke="#fff" strokeWidth="1.300" className="-mt-[3px] ml-[15px]"><path d="M8 4h14v14.500H4V12" /><path d="M9 6h11.500v11H6v-5l3-2z" fill="#fff" stroke="none" /><path d="M23.500 9v5M2 0v4M6 0v4M.5 4.500h7V7c0 4-7 4-7 0z" /></svg>
        <svg width="20" height="20" viewBox="0 0 20 20" fill="none" stroke="#fff" strokeWidth="1.200" className="ml-[15px]"><path d="M1 20C1 8 9 1.500 19 1.500" stroke="#8d8d8d" /><path d="M5 20C5 11 11 6 19 6M9.500 20c0-5 4-9 9.500-9M14 20c0-3 2-5 5-5" /><circle cx="16.500" cy="18" r="1.600" fill="#fff" stroke="none" /></svg>
        <svg width="24" height="18" viewBox="0 0 24 18" fill="none" stroke="#fff" strokeWidth="1.300" className="ml-[13px]"><path d="M1 6h3.500L9 1v16l-4.500-5H1zM12.500 6.500q2 2.500 0 5M15.500 4q4.500 5 0 10M18.500 1.500q7 7.500 0 15" /></svg>
        <div className="ml-[14px] flex w-[98px] flex-col items-center text-[17.500px] leading-[28px] tracking-[0.05px] whitespace-nowrap">
          <span>10:39 AM</span><span>20/02/2022</span>
        </div>
        <div className="relative ml-[26px] h-[36px] w-[38px]">
          <svg width="38" height="36" viewBox="0 0 38 36"><path d="M0 5h24v18H13v6l-6-6H0z" fill="#fff" /><path d="M5 10.500h14M5 14.500h14M5 18.500h9" stroke="#1c1c1c" strokeWidth="1.200" /><circle cx="23.500" cy="23.500" r="11.800" fill="#2e2e2e" stroke="#8c8c8c" strokeWidth="1.200" opacity=".95" transform="translate(0 0)" /></svg>
          <div className="absolute top-[12px] left-[18px] text-[17px] leading-[22px] font-semibold">1</div>
        </div>
        <div className="ml-[16px] h-[60px] w-[2px] bg-[#6a6a6a]" />
        <div className="w-[6px]" />
      </div>
    </div>
  );
}

export default function App() {
  return (
    <div className="flex h-[1080px] w-[1920px] flex-col overflow-hidden bg-white">
      <TabStrip />
      <AddressBar />
      <BookmarksBar />
      <div className="relative flex h-[865px] shrink-0 overflow-hidden font-['Liberation_Sans',Arial,sans-serif]">
        <div className="flex w-[1895px] flex-col bg-[#e0e5f5]">
          <Brand />
          <MenuBar />
          <Toolbar />
          <Workspace />
          <ConsoleStrip />
        </div>
        <div className="flex w-[25px] flex-col items-center bg-[#f1f1f1]">
          <div className="flex h-[25px] items-center"><Arrow dir="up" /></div>
          <div className="h-[733px] w-[21px] bg-[#c1c1c1]" />
          <div className="mt-auto flex h-[24px] items-center"><Arrow dir="down" dark /></div>
        </div>
      </div>
      <Taskbar />
      <div className="pointer-events-none absolute top-0 left-0 font-['Liberation_Sans',Arial,sans-serif]"><NotFoundDialog /></div>
    </div>
  );
}
